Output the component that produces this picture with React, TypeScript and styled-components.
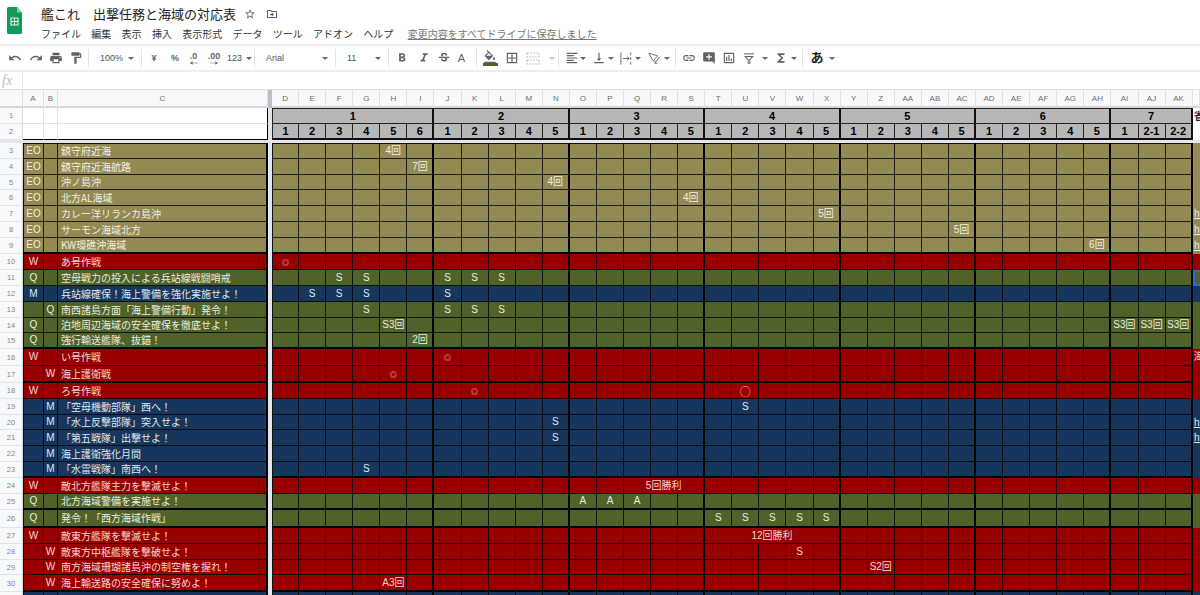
import React from 'react'
import styled, { createGlobalStyle } from 'styled-components'
import {
    MdUndo,
    MdRedo,
    MdPrint,
    MdFormatPaint,
    MdFormatBold,
    MdFormatItalic,
    MdStrikethroughS,
    MdFormatColorFill,
    MdBorderAll,
    MdFormatAlignLeft,
    MdVerticalAlignBottom,
    MdLink,
    MdAddComment,
    MdOutlineInsertChart,
    MdFunctions,
    MdStarBorder,
    MdOutlineDriveFileMove,
} from 'react-icons/md'

const SANS = `"Liberation Sans", "Noto Sans CJK JP", sans-serif`
const CJK = `"Noto Sans CJK JP", "Liberation Sans", sans-serif`

type Tone = 'olive' | 'red' | 'green' | 'navy'

const toneBg: Record<Tone, string> = { olive: '#938953', red: '#980000', green: '#4f6228', navy: '#17365d' }
const toneFg: Record<Tone, string> = { olive: '#f1efe2', red: '#f6d5d5', green: '#e9ede0', navy: '#dfe8f3' }

const COLUMNS = [
    'D', 'E', 'F', 'G', 'H', 'I', 'J', 'K', 'L', 'M', 'N', 'O', 'P', 'Q', 'R', 'S', 'T',
    'U', 'V', 'W', 'X', 'Y', 'Z', 'AA', 'AB', 'AC', 'AD', 'AE', 'AF', 'AG', 'AH', 'AI', 'AJ', 'AK',
]
const GROUP_ENDS = ['I', 'N', 'S', 'X', 'AC', 'AH', 'AK']
const MONTHS = [
    { label: '1', span: 6 },
    { label: '2', span: 5 },
    { label: '3', span: 5 },
    { label: '4', span: 5 },
    { label: '5', span: 5 },
    { label: '6', span: 5 },
    { label: '7', span: 3 },
]
const SUBS = ['1', '2', '3', '4', '5', '6', ...Array(5).fill(['1', '2', '3', '4', '5']).flat(), '1', '2-1', '2-2']

type SheetRow = {
    n: number
    h: number
    tone: Tone
    a?: string
    b?: string
    c?: string
    marks?: Record<string, string>
    merge?: { from: string; span: number; text: string }
    thick?: boolean
    last?: string
    link?: boolean
    selected?: boolean
}

const ROWS: SheetRow[] = [
    { n: 3, h: 16, tone: 'olive', a: 'EO', c: '鎮守府近海', marks: { H: '4回' } },
    { n: 4, h: 16, tone: 'olive', a: 'EO', c: '鎮守府近海航路', marks: { I: '7回' } },
    { n: 5, h: 15, tone: 'olive', a: 'EO', c: '沖ノ島沖', marks: { N: '4回' } },
    { n: 6, h: 16, tone: 'olive', a: 'EO', c: '北方AL海域', marks: { S: '4回' } },
    { n: 7, h: 16, tone: 'olive', a: 'EO', c: 'カレー洋リランカ島沖', marks: { X: '5回' }, last: 'https', link: true },
    { n: 8, h: 16, tone: 'olive', a: 'EO', c: 'サーモン海域北方', marks: { AC: '5回' }, last: 'https', link: true },
    { n: 9, h: 16, tone: 'olive', a: 'EO', c: 'KW環礁沖海域', marks: { AH: '6回' }, last: 'https', link: true, thick: true },
    { n: 10, h: 16, tone: 'red', a: 'W', c: 'あ号作戦', marks: { D: '◎' } },
    { n: 11, h: 16, tone: 'green', a: 'Q', c: '空母戦力の投入による兵站線戦闘哨戒', marks: { F: 'S', G: 'S', J: 'S', K: 'S', L: 'S' }, selected: true },
    { n: 12, h: 16, tone: 'navy', a: 'M', c: '兵站線確保！海上警備を強化実施せよ！', marks: { E: 'S', F: 'S', G: 'S', J: 'S' } },
    { n: 13, h: 16, tone: 'green', b: 'Q', c: '南西諸島方面「海上警備行動」発令！', marks: { G: 'S', J: 'S', K: 'S', L: 'S' } },
    { n: 14, h: 15, tone: 'green', a: 'Q', c: '泊地周辺海域の安全確保を徹底せよ！', marks: { H: 'S3回', AI: 'S3回', AJ: 'S3回', AK: 'S3回' } },
    { n: 15, h: 16, tone: 'green', a: 'Q', c: '強行輸送艦隊、抜錨！', marks: { I: '2回' }, thick: true },
    { n: 16, h: 17, tone: 'red', a: 'W', c: 'い号作戦', marks: { J: '◎' }, last: '海' },
    { n: 17, h: 17, tone: 'red', b: 'W', c: '海上護衛戦', marks: { H: '◎' }, thick: true },
    { n: 18, h: 16, tone: 'red', a: 'W', c: 'ろ号作戦', marks: { K: '◎', U: '○' } },
    { n: 19, h: 16, tone: 'navy', b: 'M', c: '「空母機動部隊」西へ！', marks: { U: 'S' } },
    { n: 20, h: 15, tone: 'navy', b: 'M', c: '「水上反撃部隊」突入せよ！', marks: { N: 'S' }, last: 'https', link: true },
    { n: 21, h: 16, tone: 'navy', b: 'M', c: '「第五戦隊」出撃せよ！', marks: { N: 'S' }, last: 'https', link: true },
    { n: 22, h: 16, tone: 'navy', b: 'M', c: '海上護衛強化月間' },
    { n: 23, h: 16, tone: 'navy', b: 'M', c: '「水雷戦隊」南西へ！', marks: { G: 'S' }, thick: true },
    { n: 24, h: 16, tone: 'red', a: 'W', c: '敵北方艦隊主力を撃滅せよ！', merge: { from: 'Q', span: 3, text: '5回勝利' } },
    { n: 25, h: 16, tone: 'green', a: 'Q', c: '北方海域警備を実施せよ！', marks: { O: 'A', P: 'A', Q: 'A' }, thick: true },
    { n: 26, h: 18, tone: 'green', a: 'Q', c: '発令！「西方海域作戦」', marks: { T: 'S', U: 'S', V: 'S', W: 'S', X: 'S' }, thick: true },
    { n: 27, h: 16, tone: 'red', a: 'W', c: '敵東方艦隊を撃滅せよ！', merge: { from: 'T', span: 5, text: '12回勝利' } },
    { n: 28, h: 16, tone: 'red', b: 'W', c: '敵東方中枢艦隊を撃破せよ！', marks: { W: 'S' } },
    { n: 29, h: 15, tone: 'red', b: 'W', c: '南方海域珊瑚諸島沖の制空権を握れ！', marks: { Z: 'S2回' } },
    { n: 30, h: 17, tone: 'red', b: 'W', c: '海上輸送路の安全確保に努めよ！', marks: { H: 'A3回' }, thick: true },
    { n: 31, h: 16, tone: 'navy' },
]

const GlobalStyle = createGlobalStyle`
    html, body {
        margin: 0;
        padding: 0;
        background: #fff;
        overflow: hidden;
    }
`

const Page = styled.div`
    width: 1200px;
    height: 595px;
    overflow: hidden;
    font-family: ${SANS};
    color: #202124;
`

const TitleBar = styled.header`
    height: 44px;
    display: flex;
    box-sizing: border-box;
    padding: 7px 0 0 7px;
    gap: 19px;
`

const TitleBlock = styled.div`
    display: flex;
    flex-direction: column;
    gap: 5px;
    margin-top: -1px;
`

const TitleLine = styled.div`
    display: flex;
    align-items: center;
    height: 15px;
    font-family: ${CJK};
    font-size: 13px;
    line-height: 15px;
    color: #222;
    svg {
        color: #5f6368;
        font-size: 12px;
    }
`

const TitleActions = styled.span`
    display: inline-flex;
    gap: 10px;
    margin-left: 8px;
`

const MenuLine = styled.nav`
    display: flex;
    align-items: center;
    gap: 10.3px;
    height: 14px;
    margin-top: 1px;
    font-family: ${CJK};
    font-size: 10px;
    line-height: 14px;
    color: #333;
`

const SaveNote = styled.a`
    margin-left: 4px;
    color: #777;
    text-decoration: underline;
`

const Toolbar = styled.div`
    height: 28px;
    box-sizing: border-box;
    display: flex;
    align-items: center;
    padding-left: 5px;
    border-top: 2px solid #eceef0;
    border-bottom: 2px solid #eceef0;
    color: #5f6368;
`

const Tool = styled.span<{ $w: number; $ml?: number; $off?: boolean }>`
    width: ${p => p.$w}px;
    margin-left: ${p => p.$ml ?? 0}px;
    height: 20px;
    flex: none;
    display: flex;
    flex-direction: column;
    align-items: center;
    justify-content: center;
    font-size: 14px;
    color: ${p => (p.$off ? '#c4c7cb' : '#5f6368')};
`

const ToolText = styled.span<{ $size?: number; $bold?: boolean; $ink?: string }>`
    font-size: ${p => p.$size ?? 9}px;
    font-weight: ${p => (p.$bold ? 700 : 400)};
    line-height: 10px;
    color: ${p => p.$ink ?? 'inherit'};
`

const Select = styled.span<{ $w: number; $tight?: boolean }>`
    width: ${p => p.$w}px;
    flex: none;
    display: flex;
    align-items: center;
    justify-content: space-between;
    box-sizing: border-box;
    padding: ${p => (p.$tight ? '0 2px' : '0 7px 0 11px')};
    font-size: 9px;
    color: #555;
`

const Caret = styled.i<{ $off?: boolean }>`
    display: block;
    flex: none;
    width: 0;
    height: 0;
    border-left: 3px solid transparent;
    border-right: 3px solid transparent;
    border-top: 3px solid ${p => (p.$off ? '#c4c7cb' : '#666')};
`

const Divider = styled.span`
    width: 1px;
    height: 18px;
    flex: none;
    background: #e2e3e5;
`

const FillBar = styled.i`
    display: block;
    width: 15px;
    height: 3px;
    margin-top: -1px;
    background: #4f6228;
`

const FormulaBar = styled.div`
    height: 17px;
    display: flex;
    align-items: center;
    border-bottom: 1px solid #e0e0e0;
`

const FxLabel = styled.span`
    width: 23px;
    box-sizing: border-box;
    padding-left: 2px;
    font-family: "Liberation Serif", serif;
    font-style: italic;
    font-size: 14px;
    color: #bbb;
    border-right: 1px solid #e0e0e0;
    line-height: 15px;
`

const Sheet = styled.div`
    width: 1200px;
`

const Line = styled.div<{ $h: number }>`
    display: grid;
    grid-template-columns: 23px 21px 14px 210px 4px repeat(34, 27.09px) 1fr;
    height: ${p => p.$h}px;
    width: 1200px;
`

const RowNumber = styled.div`
    display: flex;
    align-items: center;
    justify-content: center;
    box-sizing: border-box;
    background: #f8f9fa;
    border-right: 1px solid #d5d7da;
    border-bottom: 1px solid #e3e4e6;
    font-size: 7.5px;
    color: #80868b;
`

const ColumnLetter = styled.div`
    display: flex;
    align-items: center;
    justify-content: center;
    box-sizing: border-box;
    background: #f8f9fa;
    border-right: 1px solid #e0e1e3;
    border-bottom: 2px solid #d6d7d9;
    font-size: 8px;
    color: #6a6e73;
`

const Freeze = styled.div<{ $dark?: boolean }>`
    background: ${p => (p.$dark ? '#bcbfc3' : '#e4e6ec')};
`

const FreezeRow = styled.div`
    height: 3px;
    background: #e4e6ec;
`

const BlankHead = styled.div<{ $right?: boolean; $bottom?: boolean }>`
    box-sizing: border-box;
    background: #fff;
    border-right: 1px solid ${p => (p.$right ? '#000' : '#e2e3e5')};
    border-bottom: 1px solid ${p => (p.$bottom ? '#000' : '#e2e3e5')};
`

const MonthCell = styled.div<{ $span: number; $first?: boolean }>`
    grid-column: span ${p => p.$span};
    display: flex;
    align-items: center;
    justify-content: center;
    box-sizing: border-box;
    background: #b7b7b7;
    border-top: 1px solid #222;
    border-right: 2px solid #111;
    border-bottom: 1px solid #222;
    border-left: ${p => (p.$first ? '1px solid #222' : 'none')};
    font-size: 11px;
    font-weight: 700;
    color: #000;
`

const SubCell = styled.div<{ $end?: boolean; $first?: boolean }>`
    display: flex;
    align-items: center;
    justify-content: center;
    box-sizing: border-box;
    background: #b7b7b7;
    border-right: ${p => (p.$end ? '2px solid #111' : '1px solid #222')};
    border-bottom: 2px solid #111;
    border-left: ${p => (p.$first ? '1px solid #222' : 'none')};
    font-size: 11px;
    font-weight: 700;
    color: #000;
`

const Cell = styled.div<{
    $tone: Tone
    $end?: boolean
    $first?: boolean
    $thick?: boolean
    $top?: boolean
    $span?: number
    $left?: boolean
}>`
    ${p => (p.$span ? `grid-column: span ${p.$span};` : '')}
    display: flex;
    align-items: center;
    justify-content: ${p => (p.$left ? 'flex-start' : 'center')};
    box-sizing: border-box;
    min-width: 0;
    padding-left: ${p => (p.$left ? 3 : 0)}px;
    background: ${p => toneBg[p.$tone]};
    color: ${p => toneFg[p.$tone]};
    border-right: ${p => (p.$end ? '2px solid #000' : '1px solid rgba(0, 0, 0, 0.78)')};
    border-bottom: ${p => (p.$thick ? '2px solid #000' : '1px solid rgba(0, 0, 0, 0.78)')};
    border-top: ${p => (p.$top ? '1px solid #111' : 'none')};
    border-left: ${p => (p.$first ? '1px solid #111' : 'none')};
    font-family: ${p => (p.$left ? CJK : SANS)};
    font-size: 10px;
    line-height: 12px;
    white-space: nowrap;
`

const Mark = styled.span<{ $big?: boolean }>`
    font-family: ${CJK};
    font-size: ${p => (p.$big ? 11 : 7)}px;
    font-weight: ${p => (p.$big ? 400 : 700)};
    line-height: 12px;
    color: #f0b4b4;
`

const EdgeCell = styled.div<{ $tone: Tone; $link?: boolean; $selected?: boolean }>`
    box-sizing: border-box;
    overflow: hidden;
    background: ${p => toneBg[p.$tone]};
    color: ${p => toneFg[p.$tone]};
    padding-left: 1px;
    font-family: ${CJK};
    font-size: 10px;
    line-height: 14px;
    white-space: nowrap;
    text-decoration: ${p => (p.$link ? 'underline' : 'none')};
    box-shadow: ${p => (p.$selected ? 'inset 2px 2px 0 #2a6fd0, inset 0 -2px 0 #2a6fd0' : 'none')};
`

const HeadEdge = styled.div`
    overflow: hidden;
    background: #fff;
    padding-left: 1px;
    font-family: ${CJK};
    font-size: 10px;
    font-weight: 700;
    line-height: 16px;
    color: #222;
`

const SheetsLogo: React.FC = () => (
    <svg width="15" height="27" viewBox="0 0 15 27" style={{ flex: 'none' }}>
        <path d="M1.5 0H10l5 5.5V25.5a1.5 1.5 0 0 1-1.5 1.5h-12A1.5 1.5 0 0 1 0 25.5V1.5A1.5 1.5 0 0 1 1.5 0z" fill="#0f9d58" />
        <path d="M10 0l5 5.5h-5z" fill="#87ceac" />
        <path d="M3.5 10.5h8v8h-8z M4.6 11.6v2.3h2.4v-2.3z M8 11.6v2.3h2.4v-2.3z M4.6 15v2.4h2.4V15z M8 15v2.4h2.4V15z" fill="#f1f1f1" fillRule="evenodd" />
    </svg>
)

const MergeIcon: React.FC = () => (
    <svg width="14" height="13" viewBox="0 0 14 13" fill="none" stroke="currentColor" strokeWidth="1.2" strokeDasharray="2 1">
        <path d="M1 1h12v4H1z M1 8h12v4H1z" />
    </svg>
)

const WrapIcon: React.FC = () => (
    <svg width="13" height="13" viewBox="0 0 14 13" fill="none" stroke="currentColor" strokeWidth="1">
        <path d="M1 0v13" />
        <path d="M11.5 0v3 M11.5 5v3 M11.5 10v3" />
        <path d="M3 6.5h7 M7.5 4.3l2.4 2.2-2.4 2.2" />
    </svg>
)

const RotateIcon: React.FC = () => (
    <svg width="13" height="12" viewBox="0 0 15 13" fill="none" stroke="currentColor" strokeWidth="1">
        <path d="M1 1l10 3-5 6z" />
        <path d="M13.5 5L8 12.5 M8 9.5v3h3" />
    </svg>
)

const FilterIcon: React.FC = () => (
    <svg width="12" height="11" viewBox="0 0 14 13" fill="none" stroke="currentColor" strokeWidth="1.2">
        <path d="M1 1h12" />
        <path d="M2.5 4h9L8 8v4H6V8z" />
    </svg>
)

const ArrowMark: React.FC<{ back?: boolean }> = ({ back }) => (
    <svg width="8" height="4" viewBox="0 0 9 4" style={{ transform: back ? 'scaleX(-1)' : undefined }}>
        <path d="M0 1.6h6V0l3 2-3 2V2.4H0z" fill="currentColor" />
    </svg>
)

const AppToolbar: React.FC = () => (
    <Toolbar>
        <Tool $w={20.5}><MdUndo /></Tool>
        <Tool $w={20.5}><MdRedo /></Tool>
        <Tool $w={20}><MdPrint /></Tool>
        <Tool $w={20}><MdFormatPaint /></Tool>
        <Tool $w={2} />
        <Divider />
        <Select $w={52}>100%<Caret /></Select>
        <Divider />
        <Tool $w={24}><ToolText $bold>¥</ToolText></Tool>
        <Tool $w={18}><ToolText $bold>%</ToolText></Tool>
        <Tool $w={19}>
            <ToolText $bold>.0</ToolText>
            <ArrowMark back />
        </Tool>
        <Tool $w={22}>
            <ToolText $bold>.00</ToolText>
            <ArrowMark />
        </Tool>
        <Select $w={29} $tight>123<Caret /></Select>
        <Divider />
        <Select $w={80}>Arial<Caret /></Select>
        <Divider />
        <Select $w={52}>11<Caret /></Select>
        <Divider />
        <Tool $w={23} $ml={1}><MdFormatBold /></Tool>
        <Tool $w={19} $ml={1}><MdFormatItalic /></Tool>
        <Tool $w={21}><MdStrikethroughS /></Tool>
        <Tool $w={15}><ToolText $size={11}>A</ToolText></Tool>
        <Tool $w={7} />
        <Divider />
        <Tool $w={26}>
            <MdFormatColorFill />
            <FillBar />
        </Tool>
        <Tool $w={18}><MdBorderAll /></Tool>
        <Tool $w={24} $off><MergeIcon /></Tool>
        <Tool $w={13} $off><Caret $off /></Tool>
        <Divider />
        <Tool $w={20} $ml={3}><MdFormatAlignLeft /></Tool>
        <Tool $w={2}><Caret /></Tool>
        <Tool $w={20} $ml={5}><MdVerticalAlignBottom /></Tool>
        <Tool $w={4}><Caret /></Tool>
        <Tool $w={20} $ml={3}><WrapIcon /></Tool>
        <Tool $w={4}><Caret /></Tool>
        <Tool $w={20} $ml={4}><RotateIcon /></Tool>
        <Tool $w={6}><Caret /></Tool>
        <Tool $w={5} />
        <Divider />
        <Tool $w={26}><MdLink /></Tool>
        <Tool $w={14}><MdAddComment /></Tool>
        <Tool $w={26}><MdOutlineInsertChart /></Tool>
        <Tool $w={14}><FilterIcon /></Tool>
        <Tool $w={18}><Caret /></Tool>
        <Tool $w={14}><MdFunctions /></Tool>
        <Tool $w={12}><Caret /></Tool>
        <Tool $w={2} />
        <Divider />
        <Tool $w={28}><ToolText $size={13} $bold $ink="#222">あ</ToolText></Tool>
        <Tool $w={2}><Caret /></Tool>
    </Toolbar>
)

const renderMark = (text?: string) => {
    if (text === '◎') return <Mark>{text}</Mark>
    if (text === '○') return <Mark $big>{text}</Mark>
    return text
}

const DataRow: React.FC<{ row: SheetRow; top?: boolean }> = ({ row, top }) => {
    const { tone, thick, merge, marks } = row
    const from = merge ? COLUMNS.indexOf(merge.from) : -1
    const shared = { $tone: tone, $thick: thick, $top: top }
    return (
        <Line $h={row.h}>
            <RowNumber>{row.n}</RowNumber>
            <Cell {...shared} $first>{row.a}</Cell>
            <Cell {...shared}>{row.b}</Cell>
            <Cell {...shared} $left $end>{row.c}</Cell>
            <Freeze />
            {COLUMNS.map((col, i) => {
                if (merge && i === from) {
                    return <Cell key={col} {...shared} $span={merge.span} $end={GROUP_ENDS.includes(COLUMNS[from + merge.span - 1])}>{merge.text}</Cell>
                }
                if (merge && i > from && i < from + merge.span) return null
                return <Cell key={col} {...shared} $first={i === 0} $end={GROUP_ENDS.includes(col)}>{renderMark(marks?.[col])}</Cell>
            })}
            <EdgeCell $tone={tone} $link={row.link} $selected={row.selected}>{row.last}</EdgeCell>
        </Line>
    )
}

const App: React.FC = () => {
    return (
        <Page>
            <GlobalStyle />
            <TitleBar>
                <SheetsLogo />
                <TitleBlock>
                    <TitleLine>
                        艦これ　出撃任務と海域の対応表
                        <TitleActions>
                            <MdStarBorder />
                            <MdOutlineDriveFileMove />
                        </TitleActions>
                    </TitleLine>
                    <MenuLine>
                        <span>ファイル</span>
                        <span>編集</span>
                        <span>表示</span>
                        <span>挿入</span>
                        <span>表示形式</span>
                        <span>データ</span>
                        <span>ツール</span>
                        <span>アドオン</span>
                        <span>ヘルプ</span>
                        <SaveNote>変更内容をすべてドライブに保存しました</SaveNote>
                    </MenuLine>
                </TitleBlock>
            </TitleBar>
            <AppToolbar />
            <FormulaBar>
                <FxLabel>fx</FxLabel>
            </FormulaBar>
            <Sheet>
                <Line $h={18}>
                    <ColumnLetter />
                    <ColumnLetter>A</ColumnLetter>
                    <ColumnLetter>B</ColumnLetter>
                    <ColumnLetter>C</ColumnLetter>
                    <Freeze $dark />
                    {COLUMNS.map(col => <ColumnLetter key={col}>{col}</ColumnLetter>)}
                    <ColumnLetter />
                </Line>
                <Line $h={16}>
                    <RowNumber>1</RowNumber>
                    <BlankHead />
                    <BlankHead />
                    <BlankHead $right />
                    <Freeze />
                    {MONTHS.map((m, i) => <MonthCell key={m.label} $span={m.span} $first={i === 0}>{m.label}</MonthCell>)}
                    <HeadEdge>省</HeadEdge>
                </Line>
                <Line $h={16}>
                    <RowNumber>2</RowNumber>
                    <BlankHead $bottom />
                    <BlankHead $bottom />
                    <BlankHead $right $bottom />
                    <Freeze />
                    {COLUMNS.map((col, i) => <SubCell key={col} $first={i === 0} $end={GROUP_ENDS.includes(col)}>{SUBS[i]}</SubCell>)}
                    <HeadEdge />
                </Line>
                <FreezeRow />
                {ROWS.map((row, i) => <DataRow key={row.n} row={row} top={i === 0} />)}
            </Sheet>
        </Page>
    )
}

export default App
